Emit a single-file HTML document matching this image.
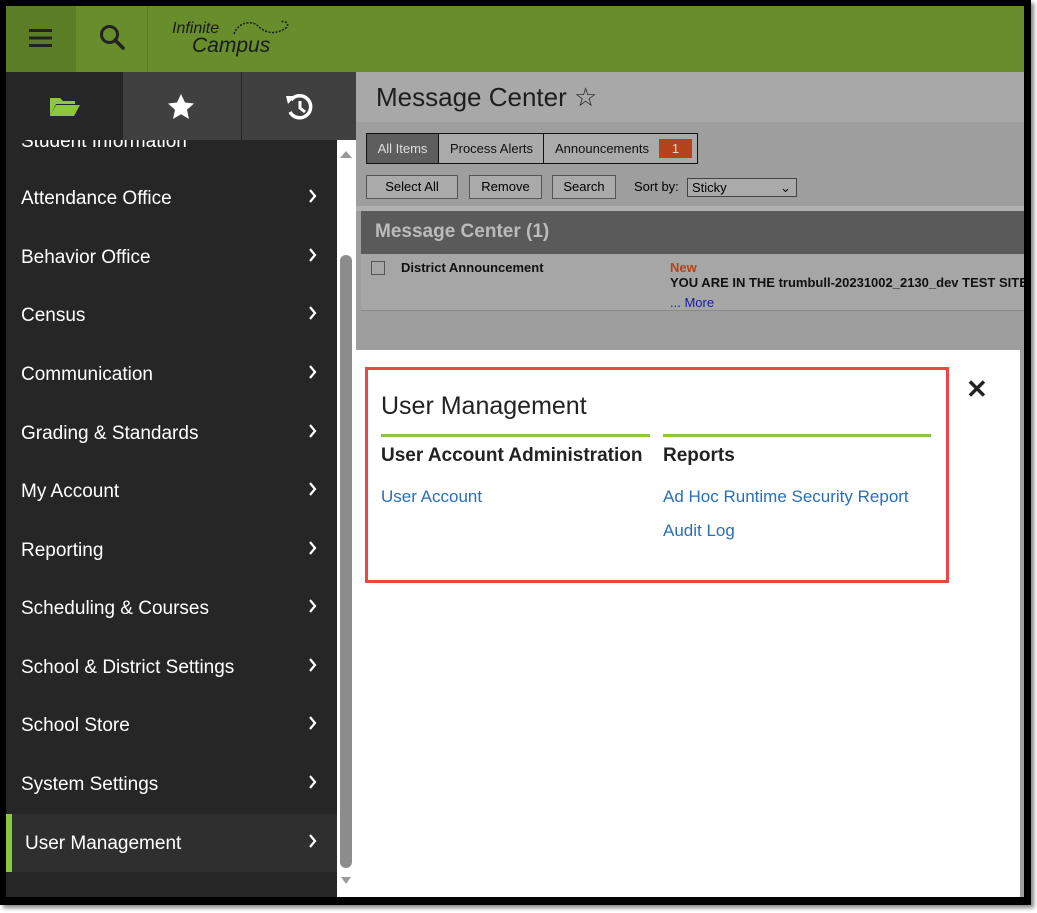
<!DOCTYPE html>
<html><head><style>
*{margin:0;padding:0;box-sizing:border-box}
body{width:1037px;height:913px;background:#fff;font-family:"Liberation Sans",Arial,sans-serif;position:relative;overflow:hidden}
.frame{position:absolute;left:0;top:0;width:1031px;height:905px;background:#000;box-shadow:3px 3px 4px #888}
.in{position:absolute;left:6px;top:6px;width:1018px;height:891px;background:#fff;overflow:hidden}
.hdr{position:absolute;left:0;top:0;width:1018px;height:66px;background:#678d2c}
.ham{position:absolute;left:0;top:0;width:70px;height:66px;background:#5a7d25}
.sep{position:absolute;left:141px;top:0;width:1px;height:66px;background:#587a23}
.side{position:absolute;left:0;top:66px;width:331px;height:825px;background:#262626;overflow:hidden}
.tab{position:absolute;top:66px;height:68px;background:#404040}
.item{position:absolute;left:15px;color:#fff;font-size:19px}
.chev{position:absolute;left:300px;width:14px;height:14px}
.sb{position:absolute;left:331px;top:134px;width:19px;height:757px;background:#fff}
.main{position:absolute;left:350px;top:66px;width:668px;height:825px;background:#9e9e9e}
.btn{position:absolute;top:103px;height:24px;border:1px solid #555;background:#aaa;font-size:13px;text-align:center;line-height:22px;color:#000}
</style></head><body>
<div class="frame"><div class="in">
<div class="hdr"></div>
<div class="ham"></div>
<svg style="position:absolute;left:23px;top:22px" width="23" height="20"><rect y="1" width="23" height="3" fill="#222"/><rect y="8.5" width="23" height="3" fill="#222"/><rect y="16" width="23" height="3" fill="#222"/></svg>
<svg style="position:absolute;left:92px;top:17px" width="30" height="30"><circle cx="11.5" cy="11.5" r="8" fill="none" stroke="#222" stroke-width="3"/><path d="M17 17l8 8" stroke="#222" stroke-width="3.5" stroke-linecap="round"/></svg>
<div class="sep"></div>
<div style="position:absolute;left:166px;top:14px;font-style:italic;font-size:16px;color:#1a1a1a">Infinite</div>
<div style="position:absolute;left:186px;top:28px;font-style:italic;font-size:21px;color:#1a1a1a">Campus</div>
<svg style="position:absolute;left:222px;top:10px" width="64" height="24"><path d="M6 18c4-12 18-14 24-8s16 10 28 2c4-4 0-8-6-6" fill="none" stroke="#1a1a1a" stroke-width="1.5" stroke-dasharray="2 1.5"/></svg>

<div class="side">
<div class="item" style="top:59px">Student Information</div>
<div class="item" style="top:116px">Attendance Office</div>
<div class="item" style="top:175px">Behavior Office</div>
<div class="item" style="top:233px">Census</div>
<div class="item" style="top:292px">Communication</div>
<div class="item" style="top:351px">Grading &amp; Standards</div>
<div class="item" style="top:409px">My Account</div>
<div class="item" style="top:468px">Reporting</div>
<div class="item" style="top:526px">Scheduling &amp; Courses</div>
<div class="item" style="top:585px">School &amp; District Settings</div>
<div class="item" style="top:643px">School Store</div>
<div class="item" style="top:702px">System Settings</div>
<div style="position:absolute;left:0;top:742px;width:331px;height:58px;background:#2f2f2f;border-left:6px solid #8dc63f"></div>
<div class="item" style="top:761px;left:19px">User Management</div>
<svg style="position:absolute;left:0;top:0" width="331" height="825">
<g fill="none" stroke="#fff" stroke-width="2.2">
<path d="M304 55l5 6-5 6"/><path d="M304 118l5 6-5 6"/><path d="M304 177l5 6-5 6"/><path d="M304 235l5 6-5 6"/><path d="M304 294l5 6-5 6"/><path d="M304 353l5 6-5 6"/><path d="M304 411l5 6-5 6"/><path d="M304 470l5 6-5 6"/><path d="M304 528l5 6-5 6"/><path d="M304 587l5 6-5 6"/><path d="M304 645l5 6-5 6"/><path d="M304 704l5 6-5 6"/><path d="M304 763l5 6-5 6"/>
</g></svg>
</div>
<div class="tab" style="left:0;width:117px;background:#262626"></div>
<div class="tab" style="left:117px;width:118px"></div>
<div class="tab" style="left:236px;width:114px"></div>
<svg style="position:absolute;left:43px;top:89px" width="32" height="22"><path d="M1 3h10l3 3h12v3H7L1 21z" fill="#8dc63f"/><path d="M7 10h24l-6 11H1z" fill="#8dc63f"/></svg>
<svg style="position:absolute;left:161px;top:87px" width="28" height="27"><path d="M14 1l4 8.5 9 1-7 6.3 2 9.2-8-4.7-8 4.7 2-9.2-7-6.3 9-1z" fill="#fff"/></svg>
<svg style="position:absolute;left:279px;top:86px" width="30" height="30"><path d="M6 8a11 11 0 1 1-1 12" fill="none" stroke="#fff" stroke-width="3.5"/><path d="M1 4l9 0-7 8z" fill="#fff"/><path d="M15 9v7l5 4" fill="none" stroke="#fff" stroke-width="3"/></svg>
<div class="sb"><div style="position:absolute;left:3px;top:115px;width:12px;height:613px;background:#8c8c8c;border-radius:6px"></div>
<div style="position:absolute;left:3px;top:11px;width:0;height:0;border:6px solid transparent;border-bottom:7px solid #999;border-top:0"></div>
<div style="position:absolute;left:4px;top:737px;width:0;height:0;border:5px solid transparent;border-top:7px solid #999;border-bottom:0"></div></div>

<div class="main">
<div style="position:absolute;left:0;top:0;width:668px;height:50px;background:#a8a8a8"></div>
<div style="position:absolute;left:20px;top:10px;font-size:26px;color:#1e1e1e">Message Center ☆</div>
<div style="position:absolute;left:10px;top:61px;width:332px;height:31px;border:1px solid #111;background:#aaa"></div>
<div style="position:absolute;left:11px;top:62px;width:72px;height:29px;background:#5e5e5e;color:#ddd;font-size:13px;line-height:29px;text-align:center;border-right:1px solid #111">All Items</div>
<div style="position:absolute;left:84px;top:62px;width:104px;height:29px;font-size:13px;line-height:29px;text-align:center;border-right:1px solid #111;color:#111">Process Alerts</div>
<div style="position:absolute;left:199px;top:62px;font-size:13px;line-height:29px;color:#111">Announcements</div>
<div style="position:absolute;left:303px;top:67px;width:33px;height:19px;background:#b5441c;color:#ddd;font-size:13px;line-height:19px;text-align:center">1</div>
<div class="btn" style="left:10px;width:92px">Select All</div>
<div class="btn" style="left:113px;width:73px">Remove</div>
<div class="btn" style="left:196px;width:64px">Search</div>
<div style="position:absolute;left:278px;top:107px;font-size:13px">Sort by:</div>
<div style="position:absolute;left:331px;top:106px;width:110px;height:19px;border:1px solid #444;background:#aaa;font-size:13px;line-height:17px;padding-left:4px">Sticky<span style="position:absolute;right:5px;top:0">⌄</span></div>
<div style="position:absolute;left:0;top:134px;width:668px;height:5px;background:#b0b0b0"></div>
<div style="position:absolute;left:5px;top:139px;width:663px;height:43px;background:#5a5a5a;color:#bbb;font-weight:bold;font-size:19px;line-height:42px;padding-left:14px">Message Center (1)</div>
<div style="position:absolute;left:5px;top:182px;width:663px;height:57px;background:#a6a6a6;border-bottom:1px solid #888"></div>
<div style="position:absolute;left:15px;top:189px;width:14px;height:14px;border:1px solid #555"></div>
<div style="position:absolute;left:45px;top:188px;font-size:13px;font-weight:bold;color:#111">District Announcement</div>
<div style="position:absolute;left:314px;top:188px;font-size:13px;font-weight:bold;color:#b5441c">New</div>
<div style="position:absolute;left:314px;top:203px;font-size:13px;font-weight:bold;color:#111;white-space:nowrap">YOU ARE IN THE trumbull-20231002_2130_dev TEST SITE</div>
<div style="position:absolute;left:314px;top:223px;font-size:13px;color:#1a1aa6">... More</div>
<div style="position:absolute;left:0;top:278px;width:664px;height:547px;background:#fff"></div>
<div style="position:absolute;left:9px;top:295px;width:584px;height:216px;border:3px solid #f04444"></div>
<div style="position:absolute;left:25px;top:320px;font-size:25px;color:#222">User Management</div>
<div style="position:absolute;left:25px;top:362px;width:269px;height:3px;background:#8dc63f"></div>
<div style="position:absolute;left:307px;top:362px;width:268px;height:3px;background:#8dc63f"></div>
<div style="position:absolute;left:25px;top:373px;font-size:19px;font-weight:bold;color:#222">User Account Administration</div>
<div style="position:absolute;left:307px;top:373px;font-size:19px;font-weight:bold;color:#222">Reports</div>
<div style="position:absolute;left:25px;top:415px;font-size:17px;color:#2a6ebb">User Account</div>
<div style="position:absolute;left:307px;top:415px;font-size:17px;color:#2a6ebb">Ad Hoc Runtime Security Report</div>
<div style="position:absolute;left:307px;top:449px;font-size:17px;color:#2a6ebb">Audit Log</div>
<div style="position:absolute;left:610px;top:302px;font-size:26px;font-weight:bold;color:#222">✕</div>
</div>
</div></div>
</body></html>
